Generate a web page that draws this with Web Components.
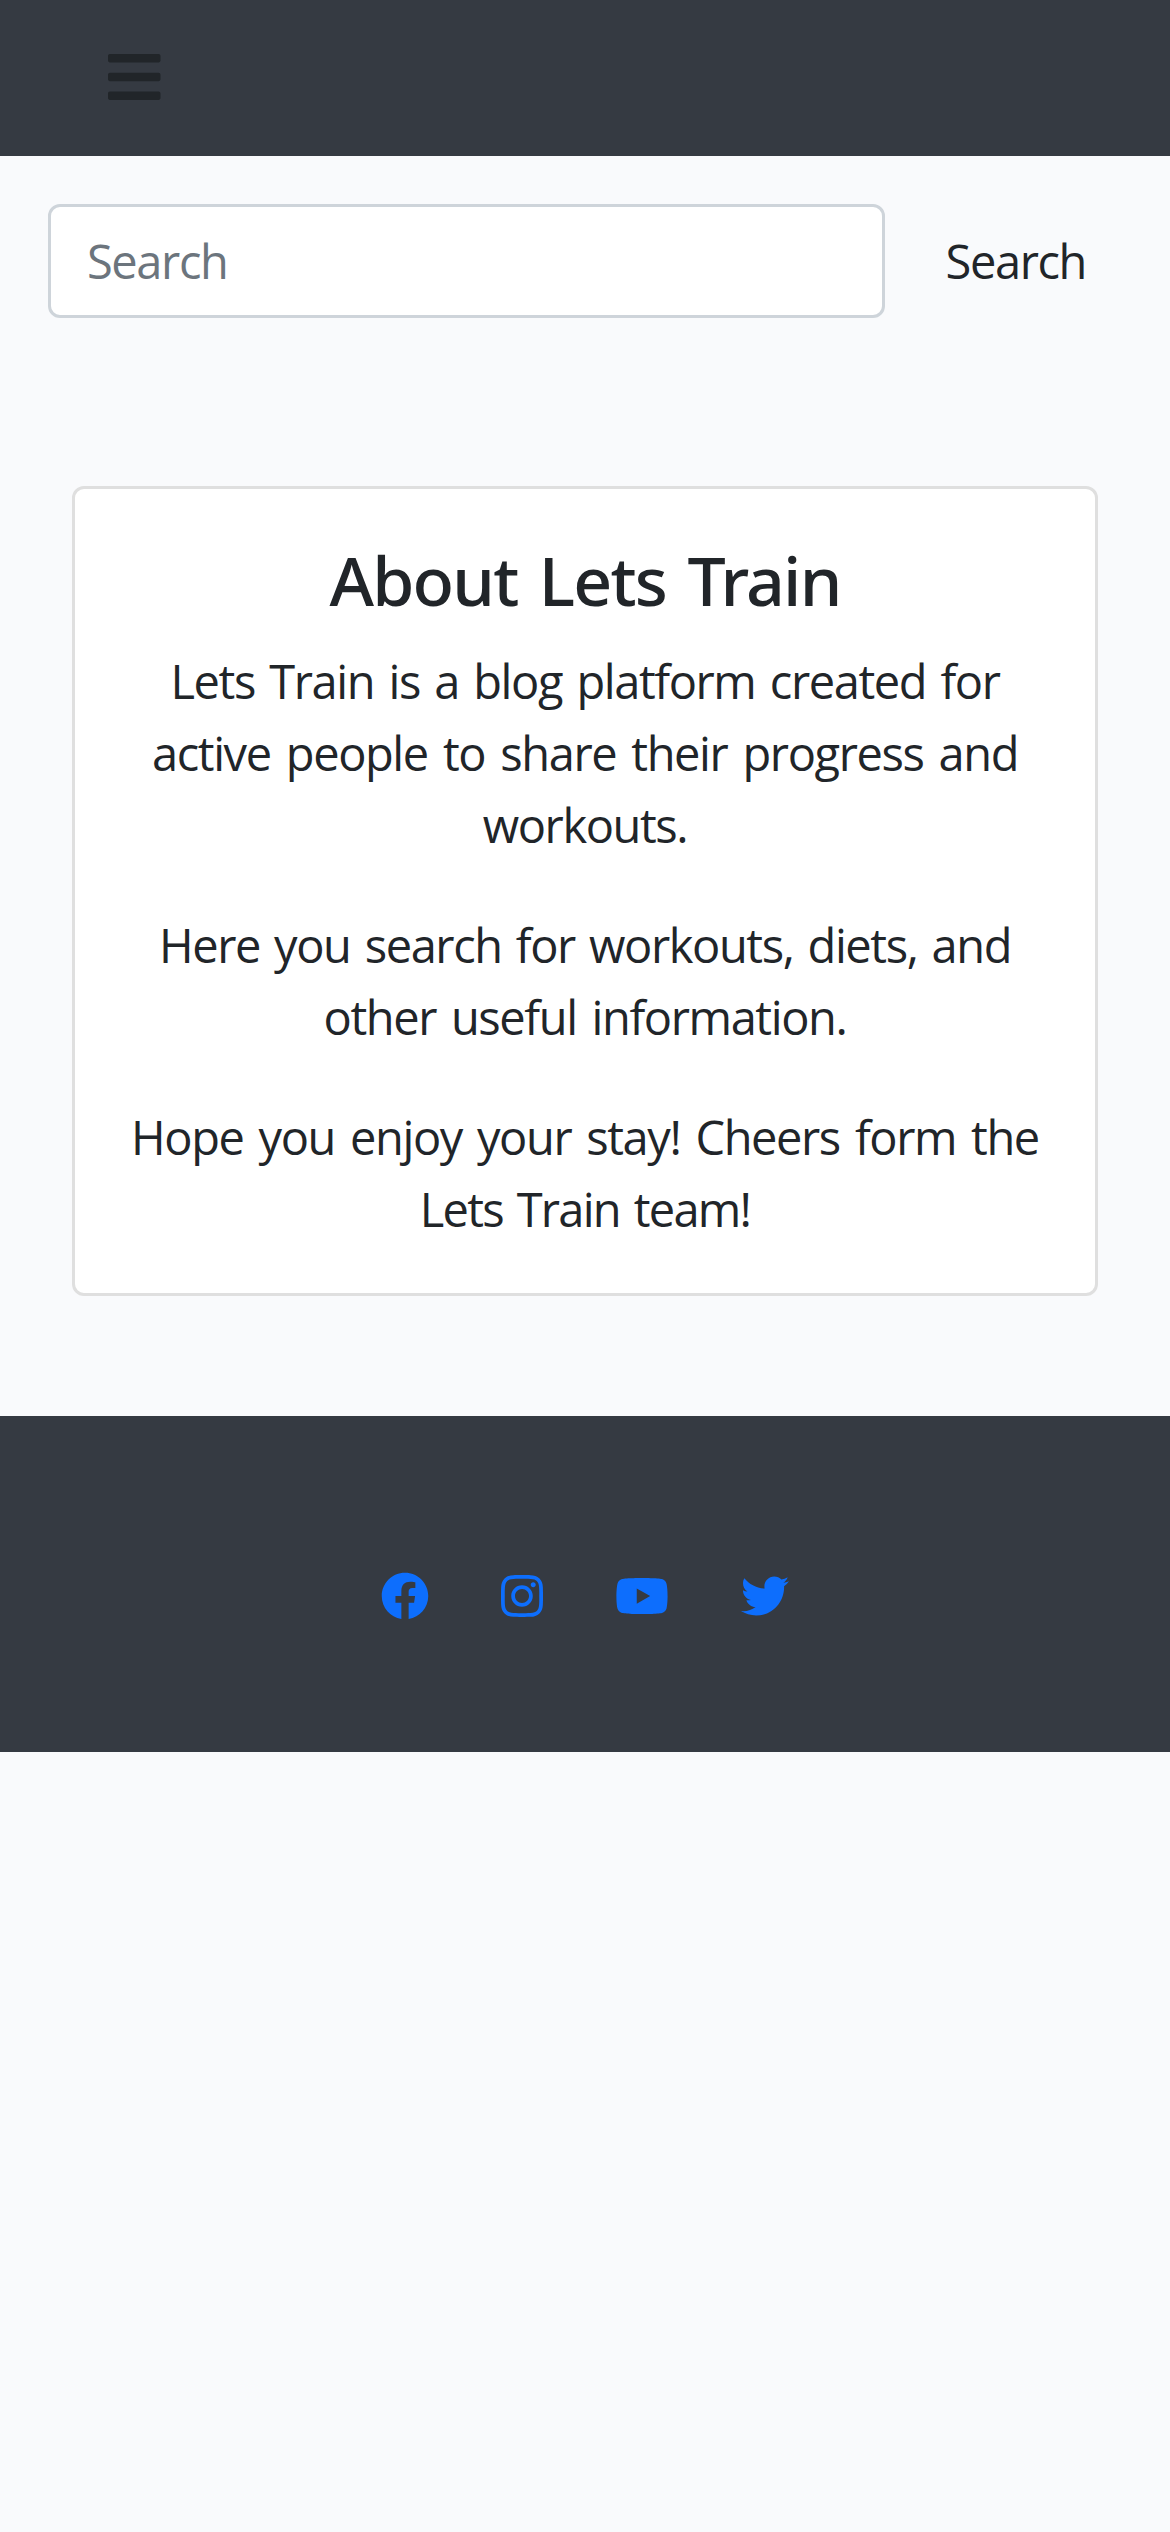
<!DOCTYPE html>
<html lang="en">
<head>
<meta charset="utf-8">
<title>Lets Train</title>
<style>
body{margin:0;min-height:2532px;background:#f9fafc;color:#212529;font:400 47px/72px "Open Sans","Noto Sans",sans-serif;letter-spacing:-1.4px}
</style>
</head>
<body>
<site-nav></site-nav>
<search-form placeholder="Search">Search</search-form>
<about-card>
  <span slot="title">About Lets Train</span>
  <text-block>
    <text-line ws="3.5">Lets Train is a blog platform created for</text-line>
    <text-line ws="4.3">active people to share their progress and</text-line>
    <text-line ws="0">workouts.</text-line>
  </text-block>
  <text-block>
    <text-line ws="3.3">Here you search for workouts, diets, and</text-line>
    <text-line ws="4.1">other useful information.</text-line>
  </text-block>
  <text-block>
    <text-line ws="4.2">Hope you enjoy your stay! Cheers form the</text-line>
    <text-line ws="3.5" ls="-1.75">Lets Train team!</text-line>
  </text-block>
</about-card>
<site-footer>
  <social-icon name="facebook"></social-icon>
  <social-icon name="instagram"></social-icon>
  <social-icon name="youtube"></social-icon>
  <social-icon name="twitter"></social-icon>
</site-footer>
<script>
const define = (name, render) => customElements.define(name, class extends HTMLElement {
  connectedCallback() {
    if (!this.shadowRoot) this.attachShadow({mode: 'open'}).innerHTML = render(this);
  }
});

define('site-nav', () => `
<style>
:host{display:flex;align-items:flex-start;box-sizing:border-box;height:156px;padding:46.6px 108px 0;background:#353a42}
button{display:flex;border:0;padding:0;background:none;color:#212529}
svg{display:block;width:52.5px;height:60px}
</style>
<button aria-label="Menu"><svg viewBox="0 0 448 512" fill="currentColor"><path d="M16 132h416c8.837 0 16-7.163 16-16V76c0-8.837-7.163-16-16-16H16C7.163 60 0 67.163 0 76v40c0 8.837 7.163 16 16 16zm0 160h416c8.837 0 16-7.163 16-16v-40c0-8.837-7.163-16-16-16H16c-8.837 0-16 7.163-16 16v40c0 8.837 7.163 16 16 16zm0 160h416c8.837 0 16-7.163 16-16v-40c0-8.837-7.163-16-16-16H16c-8.837 0-16 7.163-16 16v40c0 8.837 7.163 16 16 16z"/></svg></button>`);

define('search-form', el => `
<style>
:host{display:flex;gap:24px;padding:48px}
.field{box-sizing:border-box;width:837px;height:114px;padding:18px 36px;border:3px solid #ced4da;border-radius:12px;background:#fff;color:#6c757d}
.button{padding:21px 36px 21px 37px}
</style>
<div class="field">${el.getAttribute('placeholder')}</div>
<div class="button"><slot></slot></div>`);

define('about-card', () => `
<style>
:host{display:block;box-sizing:border-box;height:810px;margin:120px 72px;padding:48px;border:3px solid #dfdfdf;border-radius:12px;background:#fff;text-align:center}
h3{margin:0 0 24px;padding-top:1px;font:500 68px/83.3px "Noto Sans","Open Sans",sans-serif;letter-spacing:-1.8px;word-spacing:5.5px}
</style>
<h3><slot name="title"></slot></h3>
<slot></slot>`);

define('text-block', () => `
<style>:host{display:block;margin-bottom:48px}</style><slot></slot>`);

define('text-line', el => `
<style>:host{display:block;white-space:nowrap;word-spacing:${el.getAttribute('ws')}px;letter-spacing:${el.getAttribute('ls') || -1.4}px}</style><slot></slot>`);

define('site-footer', () => `
<style>:host{display:flex;justify-content:center;gap:72px;box-sizing:border-box;height:336px;padding-top:155.6px;background:#353a42}</style>
<slot></slot>`);

const ICONS = {
  facebook: [512, 'M504 256C504 119 393 8 256 8S8 119 8 256c0 123.78 90.69 226.38 209.25 245V327.69h-63V256h63v-54.64c0-62.15 37-96.48 93.67-96.48 27.14 0 55.52 4.84 55.52 4.84v61h-31.28c-30.8 0-40.41 19.12-40.41 38.73V256h68.78l-11 71.69h-57.78V501C413.31 482.38 504 379.78 504 256z'],
  instagram: [448, 'M224.1 141c-63.6 0-114.9 51.3-114.9 114.9s51.3 114.9 114.9 114.9S339 319.5 339 255.9 287.7 141 224.1 141zm0 189.6c-41.1 0-74.7-33.5-74.7-74.7s33.5-74.7 74.7-74.7 74.7 33.5 74.7 74.7-33.6 74.7-74.7 74.7zm146.4-194.3c0 14.9-12 26.8-26.8 26.8-14.9 0-26.8-12-26.8-26.8s12-26.8 26.8-26.8 26.8 12 26.8 26.8zm76.1 27.2c-1.7-35.9-9.9-67.7-36.2-93.9-26.2-26.2-58-34.4-93.9-36.2-37-2.1-147.9-2.1-184.9 0-35.8 1.7-67.6 9.9-93.9 36.1s-34.4 58-36.2 93.9c-2.1 37-2.1 147.9 0 184.9 1.7 35.9 9.9 67.7 36.2 93.9s58 34.4 93.9 36.2c37 2.1 147.9 2.1 184.9 0 35.9-1.7 67.7-9.9 93.9-36.2 26.2-26.2 34.4-58 36.2-93.9 2.1-37 2.1-147.8 0-184.8zM398.8 388c-7.8 19.6-22.9 34.7-42.6 42.6-29.5 11.7-99.5 9-132.1 9s-102.7 2.6-132.1-9c-19.6-7.8-34.7-22.9-42.6-42.6-11.7-29.5-9-99.5-9-132.1s-2.6-102.7 9-132.1c7.8-19.6 22.9-34.7 42.6-42.6 29.5-11.7 99.5-9 132.1-9s102.7-2.6 132.1 9c19.6 7.8 34.7 22.9 42.6 42.6 11.7 29.5 9 99.5 9 132.1s2.7 102.7-9 132.1z'],
  youtube: [576, 'M549.655 124.083c-6.281-23.65-24.787-42.276-48.284-48.597C458.781 64 288 64 288 64S117.22 64 74.629 75.486c-23.497 6.322-42.003 24.947-48.284 48.597-11.412 42.867-11.412 132.305-11.412 132.305s0 89.438 11.412 132.305c6.281 23.65 24.787 41.5 48.284 47.821C117.22 448 288 448 288 448s170.78 0 213.371-11.486c23.497-6.321 42.003-24.171 48.284-47.821 11.412-42.867 11.412-132.305 11.412-132.305s0-89.438-11.412-132.305zm-317.51 213.508V175.185l142.739 81.205-142.739 81.201z'],
  twitter: [512, 'M459.37 151.716c.325 4.548.325 9.097.325 13.645 0 138.72-105.583 298.558-298.558 298.558-59.452 0-114.68-17.219-161.137-47.106 8.447.974 16.568 1.299 25.34 1.299 49.055 0 94.213-16.568 130.274-44.832-46.132-.975-84.792-31.188-98.112-72.772 6.498.974 12.995 1.624 19.818 1.624 9.421 0 18.843-1.3 27.614-3.573-48.081-9.747-84.143-51.98-84.143-102.985v-1.299c13.969 7.797 30.214 12.67 47.431 13.319-28.264-18.843-46.781-51.005-46.781-87.391 0-19.492 5.197-37.36 14.294-52.954 51.655 63.675 129.3 105.258 216.365 109.807-1.624-7.797-2.599-15.918-2.599-24.04 0-57.828 46.782-104.934 104.934-104.934 30.213 0 57.502 12.67 76.67 33.137 23.715-4.548 46.456-13.32 66.599-25.34-7.798 24.366-24.366 44.833-46.132 57.827 21.117-2.273 41.584-8.122 60.426-16.243-14.292 20.791-32.161 39.308-52.628 54.253z']
};
define('social-icon', el => {
  const [w, d] = ICONS[el.getAttribute('name')];
  return `
<style>:host{display:block;color:#0d6efd}svg{display:block;height:48px;width:${w * 48 / 512}px}</style>
<svg viewBox="0 0 ${w} 512" fill="currentColor"><path d="${d}"/></svg>`;
});
</script>
</body>
</html>
